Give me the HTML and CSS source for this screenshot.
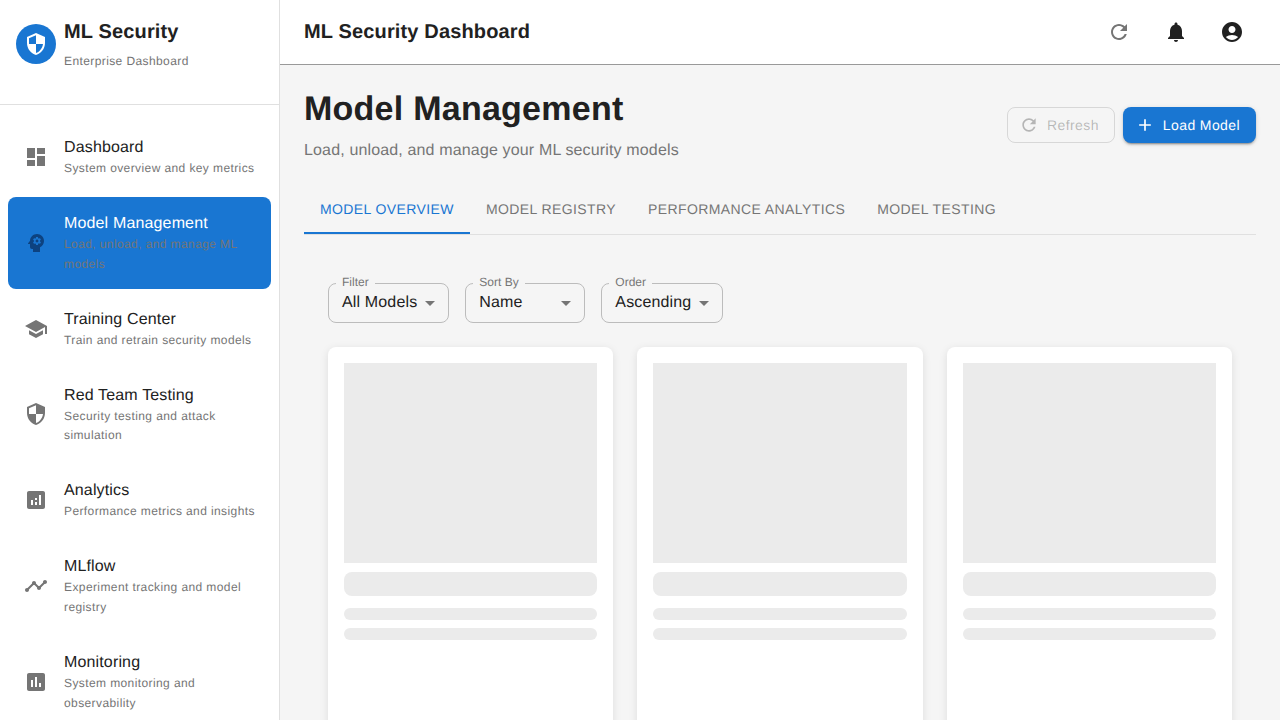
FILE: index.html
```html
<!DOCTYPE html>
<html lang="en">
<head>
    <meta charset="UTF-8">
    <meta name="viewport" content="width=device-width, initial-scale=1.0">
    <title>ML Security Dashboard</title>
    <link rel="stylesheet" href="styles.css">
</head>
<body>
    <div class="app">
        <aside class="sidebar">
            <div class="brand">
                <div class="brand-logo">
                    <svg class="icon" viewBox="0 0 24 24"><path d="M12 1 3 5v6c0 5.55 3.84 10.74 9 12 5.16-1.26 9-6.45 9-12V5l-9-4zm0 10.99h7c-.53 4.12-3.28 7.79-7 8.94V12H5V6.3l7-3.11v8.8z"/></svg>
                </div>
                <div>
                    <div class="brand-name">ML Security</div>
                    <div class="brand-sub">Enterprise Dashboard</div>
                </div>
            </div>
            <nav class="nav">
                <a class="nav-item">
                    <svg class="icon nav-icon" viewBox="0 0 24 24"><path d="M3 13h8V3H3v10zm0 8h8v-6H3v6zm10 0h8V11h-8v10zm0-18v6h8V3h-8z"/></svg>
                    <div class="nav-text">
                        <div class="nav-title">Dashboard</div>
                        <div class="nav-sub">System overview and key metrics</div>
                    </div>
                </a>
                <a class="nav-item active">
                    <svg class="icon nav-icon" viewBox="0 0 24 24"><path d="M13 8.57c-.79 0-1.43.64-1.43 1.43s.64 1.43 1.43 1.43 1.43-.64 1.43-1.43-.64-1.43-1.43-1.43z"/><path d="M13 3C9.25 3 6.2 5.94 6.02 9.64L4.1 12.2c-.25.33-.01.8.4.8H6v3c0 1.1.9 2 2 2h1v3h7v-4.68c2.36-1.12 4-3.53 4-6.32 0-3.87-3.13-7-7-7zm3 7c0 .13-.01.26-.03.38l.85.66c.08.06.1.17.05.25l-.8 1.39c-.05.09-.16.12-.24.09l-.99-.4c-.21.16-.43.29-.67.39L14 13.83c-.01.1-.1.17-.2.17h-1.6c-.1 0-.18-.07-.2-.17l-.15-1.06c-.25-.1-.47-.23-.68-.39l-.99.4c-.09.03-.2 0-.25-.09l-.8-1.39c-.05-.08-.03-.19.05-.25l.84-.66c-.01-.13-.02-.26-.02-.39s.02-.27.04-.39l-.85-.66c-.08-.06-.1-.17-.05-.26l.8-1.38c.05-.09.15-.12.24-.09l1 .4c.2-.15.43-.29.67-.39L12 6.17c.02-.1.1-.17.2-.17h1.6c.1 0 .18.07.2.17l.15 1.06c.24.1.46.23.67.39l1-.4c.09-.03.2 0 .24.09l.8 1.38c.05.09.03.2-.05.26l-.85.66c.03.12.04.25.04.39z"/></svg>
                    <div class="nav-text">
                        <div class="nav-title">Model Management</div>
                        <div class="nav-sub">Load, unload, and manage ML models</div>
                    </div>
                </a>
                <a class="nav-item">
                    <svg class="icon nav-icon" viewBox="0 0 24 24"><path d="M5 13.18v4L12 21l7-3.82v-4L12 17l-7-3.82zM12 3 1 9l11 6 9-4.91V17h2V9L12 3z"/></svg>
                    <div class="nav-text">
                        <div class="nav-title">Training Center</div>
                        <div class="nav-sub">Train and retrain security models</div>
                    </div>
                </a>
                <a class="nav-item">
                    <svg class="icon nav-icon" viewBox="0 0 24 24"><path d="M12 1 3 5v6c0 5.55 3.84 10.74 9 12 5.16-1.26 9-6.45 9-12V5l-9-4zm0 10.99h7c-.53 4.12-3.28 7.79-7 8.94V12H5V6.3l7-3.11v8.8z"/></svg>
                    <div class="nav-text">
                        <div class="nav-title">Red Team Testing</div>
                        <div class="nav-sub">Security testing and attack simulation</div>
                    </div>
                </a>
                <a class="nav-item">
                    <svg class="icon nav-icon" viewBox="0 0 24 24"><path d="M19 3H5c-1.1 0-2 .9-2 2v14c0 1.1.9 2 2 2h14c1.1 0 2-.9 2-2V5c0-1.1-.9-2-2-2zM9 17H7v-5h2v5zm4 0h-2v-3h2v3zm0-5h-2v-2h2v2zm4 5h-2V7h2v10z"/></svg>
                    <div class="nav-text">
                        <div class="nav-title">Analytics</div>
                        <div class="nav-sub">Performance metrics and insights</div>
                    </div>
                </a>
                <a class="nav-item">
                    <svg class="icon nav-icon" viewBox="0 0 24 24"><path d="M23 8c0 1.1-.9 2-2 2-.18 0-.35-.02-.51-.07l-3.56 3.55c.05.16.07.34.07.52 0 1.1-.9 2-2 2s-2-.9-2-2c0-.18.02-.36.07-.52l-2.55-2.55c-.16.05-.34.07-.52.07s-.36-.02-.52-.07l-4.55 4.56c.05.16.07.33.07.51 0 1.1-.9 2-2 2s-2-.9-2-2 .9-2 2-2c.18 0 .35.02.51.07l4.56-4.55C8.02 9.36 8 9.18 8 9c0-1.1.9-2 2-2s2 .9 2 2c0 .18-.02.36-.07.52l2.55 2.55c.16-.05.34-.07.52-.07s.36.02.52.07l3.55-3.56C19.02 8.35 19 8.18 19 8c0-1.1.9-2 2-2s2 .9 2 2z"/></svg>
                    <div class="nav-text">
                        <div class="nav-title">MLflow</div>
                        <div class="nav-sub">Experiment tracking and model registry</div>
                    </div>
                </a>
                <a class="nav-item">
                    <svg class="icon nav-icon" viewBox="0 0 24 24"><path d="M19 3H5c-1.1 0-2 .9-2 2v14c0 1.1.9 2 2 2h14c1.1 0 2-.9 2-2V5c0-1.1-.9-2-2-2zM9 17H7v-7h2v7zm4 0h-2V7h2v10zm4 0h-2v-4h2v4z"/></svg>
                    <div class="nav-text">
                        <div class="nav-title">Monitoring</div>
                        <div class="nav-sub">System monitoring and observability</div>
                    </div>
                </a>
            </nav>
        </aside>

        <div class="content">
            <header class="topbar">
                <div class="topbar-title">ML Security Dashboard</div>
                <div class="topbar-actions">
                    <button class="icon-btn muted"><svg class="icon" viewBox="0 0 24 24"><path d="M17.65 6.35C16.2 4.9 14.21 4 12 4c-4.42 0-7.99 3.58-7.99 8s3.57 8 7.99 8c3.73 0 6.84-2.55 7.73-6h-2.08c-.82 2.33-3.04 4-5.65 4-3.31 0-6-2.69-6-6s2.69-6 6-6c1.66 0 3.14.69 4.22 1.78L13 11h7V4l-2.35 2.35z"/></svg></button>
                    <button class="icon-btn"><svg class="icon" viewBox="0 0 24 24"><path d="M12 22c1.1 0 2-.9 2-2h-4c0 1.1.89 2 2 2zm6-6v-5c0-3.07-1.64-5.64-4.5-6.32V4c0-.83-.67-1.5-1.5-1.5s-1.5.67-1.5 1.5v.68C7.63 5.36 6 7.92 6 11v5l-2 2v1h16v-1l-2-2z"/></svg></button>
                    <button class="icon-btn"><svg class="icon" viewBox="0 0 24 24"><path d="M12 2C6.48 2 2 6.48 2 12s4.48 10 10 10 10-4.48 10-10S17.52 2 12 2zm0 4c1.93 0 3.5 1.57 3.5 3.5S13.93 13 12 13s-3.5-1.57-3.5-3.5S10.07 6 12 6zm0 14c-2.03 0-4.43-.82-6.14-2.88C7.55 15.8 9.68 15 12 15s4.45.8 6.14 2.12C16.43 19.18 14.03 20 12 20z"/></svg></button>
                </div>
            </header>

            <main class="page">
                <div class="page-head">
                    <div>
                        <h1 class="page-title">Model Management</h1>
                        <p class="page-sub">Load, unload, and manage your ML security models</p>
                    </div>
                    <div class="page-actions">
                        <button class="btn btn-outline" disabled>
                            <svg class="icon btn-icon" viewBox="0 0 24 24"><path d="M17.65 6.35C16.2 4.9 14.21 4 12 4c-4.42 0-7.99 3.58-7.99 8s3.57 8 7.99 8c3.73 0 6.84-2.55 7.73-6h-2.08c-.82 2.33-3.04 4-5.65 4-3.31 0-6-2.69-6-6s2.69-6 6-6c1.66 0 3.14.69 4.22 1.78L13 11h7V4l-2.35 2.35z"/></svg>
                            Refresh
                        </button>
                        <button class="btn btn-primary">
                            <svg class="icon btn-icon" viewBox="0 0 24 24"><path d="M19 13h-6v6h-2v-6H5v-2h6V5h2v6h6v2z"/></svg>
                            Load Model
                        </button>
                    </div>
                </div>

                <div class="tabs">
                    <div class="tab active">Model Overview</div>
                    <div class="tab">Model Registry</div>
                    <div class="tab">Performance Analytics</div>
                    <div class="tab">Model Testing</div>
                </div>

                <div class="panel">
                    <div class="filters">
                        <div class="select">
                            <span class="select-label">Filter</span>
                            <span class="select-value">All Models</span>
                            <svg class="select-arrow" viewBox="0 0 24 24"><path d="m7 10 5 5 5-5z"/></svg>
                        </div>
                        <div class="select">
                            <span class="select-label">Sort By</span>
                            <span class="select-value">Name</span>
                            <svg class="select-arrow" viewBox="0 0 24 24"><path d="m7 10 5 5 5-5z"/></svg>
                        </div>
                        <div class="select">
                            <span class="select-label">Order</span>
                            <span class="select-value">Ascending</span>
                            <svg class="select-arrow" viewBox="0 0 24 24"><path d="m7 10 5 5 5-5z"/></svg>
                        </div>
                    </div>

                    <div class="cards">
                        <div class="card">
                            <div class="skel skel-img"></div>
                            <div class="skel skel-title"></div>
                            <div class="skel skel-line"></div>
                            <div class="skel skel-line"></div>
                        </div>
                        <div class="card">
                            <div class="skel skel-img"></div>
                            <div class="skel skel-title"></div>
                            <div class="skel skel-line"></div>
                            <div class="skel skel-line"></div>
                        </div>
                        <div class="card">
                            <div class="skel skel-img"></div>
                            <div class="skel skel-title"></div>
                            <div class="skel skel-line"></div>
                            <div class="skel skel-line"></div>
                        </div>
                    </div>
                </div>
            </main>
        </div>
    </div>
</body>
</html>
```

FILE: styles.css
```css
* {
    box-sizing: border-box;
}
body {
    margin: 0;
    font-family: "Liberation Sans", Arial, sans-serif;
    color: #212121;
    background-color: #f5f5f5;
    text-rendering: geometricPrecision;
}
.app {
    display: flex;
    height: 100vh;
    overflow: hidden;
}
.icon {
    display: block;
    width: 24px;
    height: 24px;
    fill: currentColor;
    flex-shrink: 0;
}

/* sidebar */
.sidebar {
    width: 280px;
    flex-shrink: 0;
    background-color: #fff;
    border-right: 1px solid #e0e0e0;
}
.brand {
    display: flex;
    align-items: center;
    height: 104.92px;
    padding: 16px 16px 32px;
    border-bottom: 1px solid #e0e0e0;
}
.brand-logo {
    display: flex;
    align-items: center;
    justify-content: center;
    width: 40px;
    height: 40px;
    margin-right: 8px;
    border-radius: 50%;
    background-color: #1976d2;
    color: #fff;
}
.brand-name {
    font-size: 20px;
    font-weight: 600;
    line-height: 31px;
    letter-spacing: 0.15px;
}
.brand-sub {
    margin-top: 4px;
    font-size: 12px;
    line-height: 1.66;
    letter-spacing: 0.4px;
    color: #757575;
}
.nav {
    display: flex;
    flex-direction: column;
    gap: 4px;
    padding: 16px 8px;
}
.nav-item {
    display: flex;
    align-items: center;
    padding: 16px 16px 14px;
    border-radius: 8px;
}
.nav-icon {
    margin-right: 16px;
    margin-bottom: 2px;
    color: #757575;
}
.nav-title {
    font-size: 16px;
    line-height: 22px;
    letter-spacing: 0.15px;
}
.nav-sub {
    font-size: 12px;
    line-height: 1.66;
    letter-spacing: 0.4px;
    color: #757575;
}
.nav-item.active {
    background-color: #1976d2;
}
.nav-item.active .nav-icon {
    color: #0d4280;
}
.nav-item.active .nav-title {
    color: #fff;
}

/* top bar */
.content {
    flex: 1;
    min-width: 0;
}
.topbar {
    display: flex;
    align-items: center;
    justify-content: space-between;
    height: 65px;
    padding: 0 24px;
    background-color: #fff;
    border-bottom: 1px solid #999;
}
.topbar-title {
    font-size: 20px;
    font-weight: 600;
    letter-spacing: 0.15px;
}
.topbar-actions {
    display: flex;
    gap: 8px;
}
.icon-btn {
    display: flex;
    align-items: center;
    justify-content: center;
    width: 48px;
    height: 48px;
    padding: 0;
    border: none;
    background: none;
    color: #212121;
}
.icon-btn.muted {
    margin-right: 1px;
    color: #757575;
}

/* page */
.page {
    padding: 23px 24px 24px;
}
.page-head {
    display: flex;
    align-items: center;
    justify-content: space-between;
}
.page-title {
    margin: 0 0 11px;
    font-size: 34px;
    font-weight: 700;
    line-height: 42px;
    letter-spacing: 0.25px;
}
.page-sub {
    margin: 0 0 1px;
    font-size: 16px;
    line-height: 20px;
    letter-spacing: 0.15px;
    color: #757575;
}
.page-actions {
    display: flex;
    gap: 8px;
}
.btn {
    display: flex;
    align-items: center;
    height: 36px;
    padding: 0 16px 0 12px;
    border-radius: 8px;
    font-family: inherit;
    font-size: 14px;
    font-weight: 500;
    letter-spacing: 0.4px;
    text-rendering: geometricPrecision;
}
.btn-icon {
    width: 20px;
    height: 20px;
    margin-right: 8px;
}
.btn-outline {
    padding: 0 15px 0 11px;
    background: none;
    border: 1px solid rgba(0, 0, 0, 0.12);
    color: rgba(0, 0, 0, 0.26);
}
.btn-primary {
    background-color: #1976d2;
    border: none;
    color: #fff;
    box-shadow: 0 3px 1px -2px rgba(0, 0, 0, 0.2), 0 2px 2px rgba(0, 0, 0, 0.14), 0 1px 5px rgba(0, 0, 0, 0.12);
}

/* tabs */
.tabs {
    display: flex;
    margin-top: 24px;
    border-bottom: 1px solid #e0e0e0;
}
.tab {
    height: 48px;
    padding: 0 16px;
    font-size: 14px;
    font-weight: 500;
    line-height: 46px;
    letter-spacing: 0.4px;
    text-transform: uppercase;
    color: #757575;
}
.tab.active {
    color: #1976d2;
    border-bottom: 2px solid #1976d2;
}

/* model overview */
.panel {
    padding: 48px 24px 24px;
}
.filters {
    display: flex;
    gap: 16px;
    margin-bottom: 24px;
}
.select {
    position: relative;
    display: flex;
    align-items: center;
    min-width: 120px;
    height: 40px;
    padding: 0 31px 0 13px;
    border: 1px solid #bcbcbc;
    border-radius: 8px;
}
.select-label {
    position: absolute;
    top: -9px;
    left: 7px;
    padding: 0 6px;
    font-size: 12px;
    line-height: 15px;
    color: #757575;
    background-color: #f5f5f5;
}
.select-value {
    font-size: 16px;
    letter-spacing: 0.15px;
}
.select-arrow {
    position: absolute;
    top: 7px;
    right: 6px;
    width: 24px;
    height: 24px;
    fill: #757575;
}
.cards {
    display: grid;
    grid-template-columns: repeat(3, 1fr);
    gap: 24px;
}
.card {
    height: 420px;
    padding: 16px;
    background-color: #fff;
    border-radius: 8px;
    box-shadow: 0 2px 8px rgba(0, 0, 0, 0.1);
}
.skel {
    background-color: #ebebeb;
}
.skel-img {
    height: 200px;
}
.skel-title {
    height: 24px;
    margin-top: 9px;
    border-radius: 8px;
}
.skel-line {
    height: 12px;
    margin-top: 8px;
    border-radius: 6px;
}
.skel-title + .skel-line {
    margin-top: 12px;
}
```
